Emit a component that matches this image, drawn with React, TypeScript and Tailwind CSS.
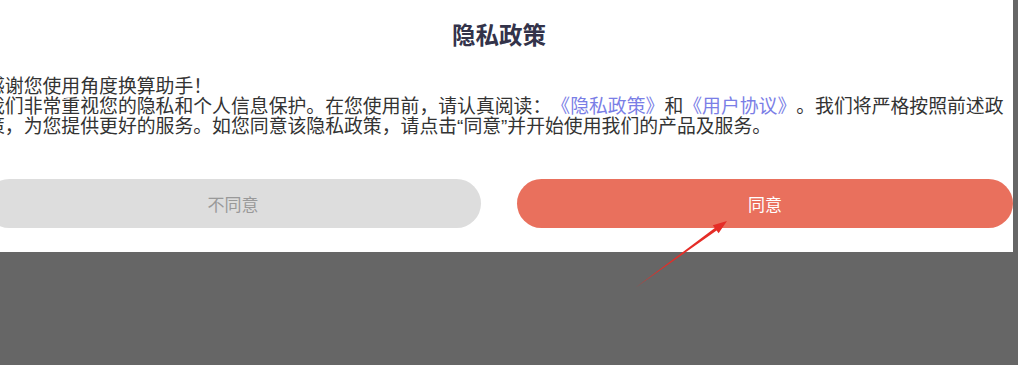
export default function App() {
  return (
    <div className="relative w-[1018px] h-[365px] overflow-hidden bg-[#666666] font-['Noto_Sans_CJK_SC','Noto_Sans',sans-serif] [text-spacing-trim:space-all]">
      {/* Dialog */}
      <div className="-ml-[15px] w-[1028px] h-[252px] bg-white flex flex-col">
        <h1 className="pt-[22px] text-center text-[23.5px] leading-[24px] font-bold text-[#33334a]">
          隐私政策
        </h1>

        <div className="mt-[29px] px-[1px] text-[18.85px] leading-[20px] text-[#333333] whitespace-nowrap">
          <p>感谢您使用角度换算助手！</p>
          <p>
            我们非常重视您的隐私和个人信息保护。在您使用前，请认真阅读：
            <span className="text-[#7a7ee6]">《隐私政策》</span>和
            <span className="text-[#7a7ee6]">《用户协议》</span>。我们将严格按照前述政
            <br />
            策，为您提供更好的服务。如您同意该隐私政策，请点击
            <span className="font-['Liberation_Sans',sans-serif]">“</span>同意
            <span className="font-['Liberation_Sans',sans-serif]">”</span>并开始使用我们的产品及服务。
          </p>
        </div>

        <div className="mt-[42px] flex gap-[36px]">
          <button className="w-[496px] h-[49px] rounded-full bg-[#dddddd] text-[17px] text-[#999999]">
            不同意
          </button>
          <button className="w-[496px] h-[49px] rounded-full bg-[#e9705d] text-[17px] text-white">
            同意
          </button>
        </div>
      </div>

      {/* Annotation arrow */}
      <svg className="absolute left-0 top-0 pointer-events-none" width="1018" height="365" viewBox="0 0 1018 365">
        <polygon
          points="635,288 714.8,228 712.8,225.2 727,221 718.6,233.3 716.6,230.4"
          fill="#e52d27"
        />
      </svg>
    </div>
  )
}
